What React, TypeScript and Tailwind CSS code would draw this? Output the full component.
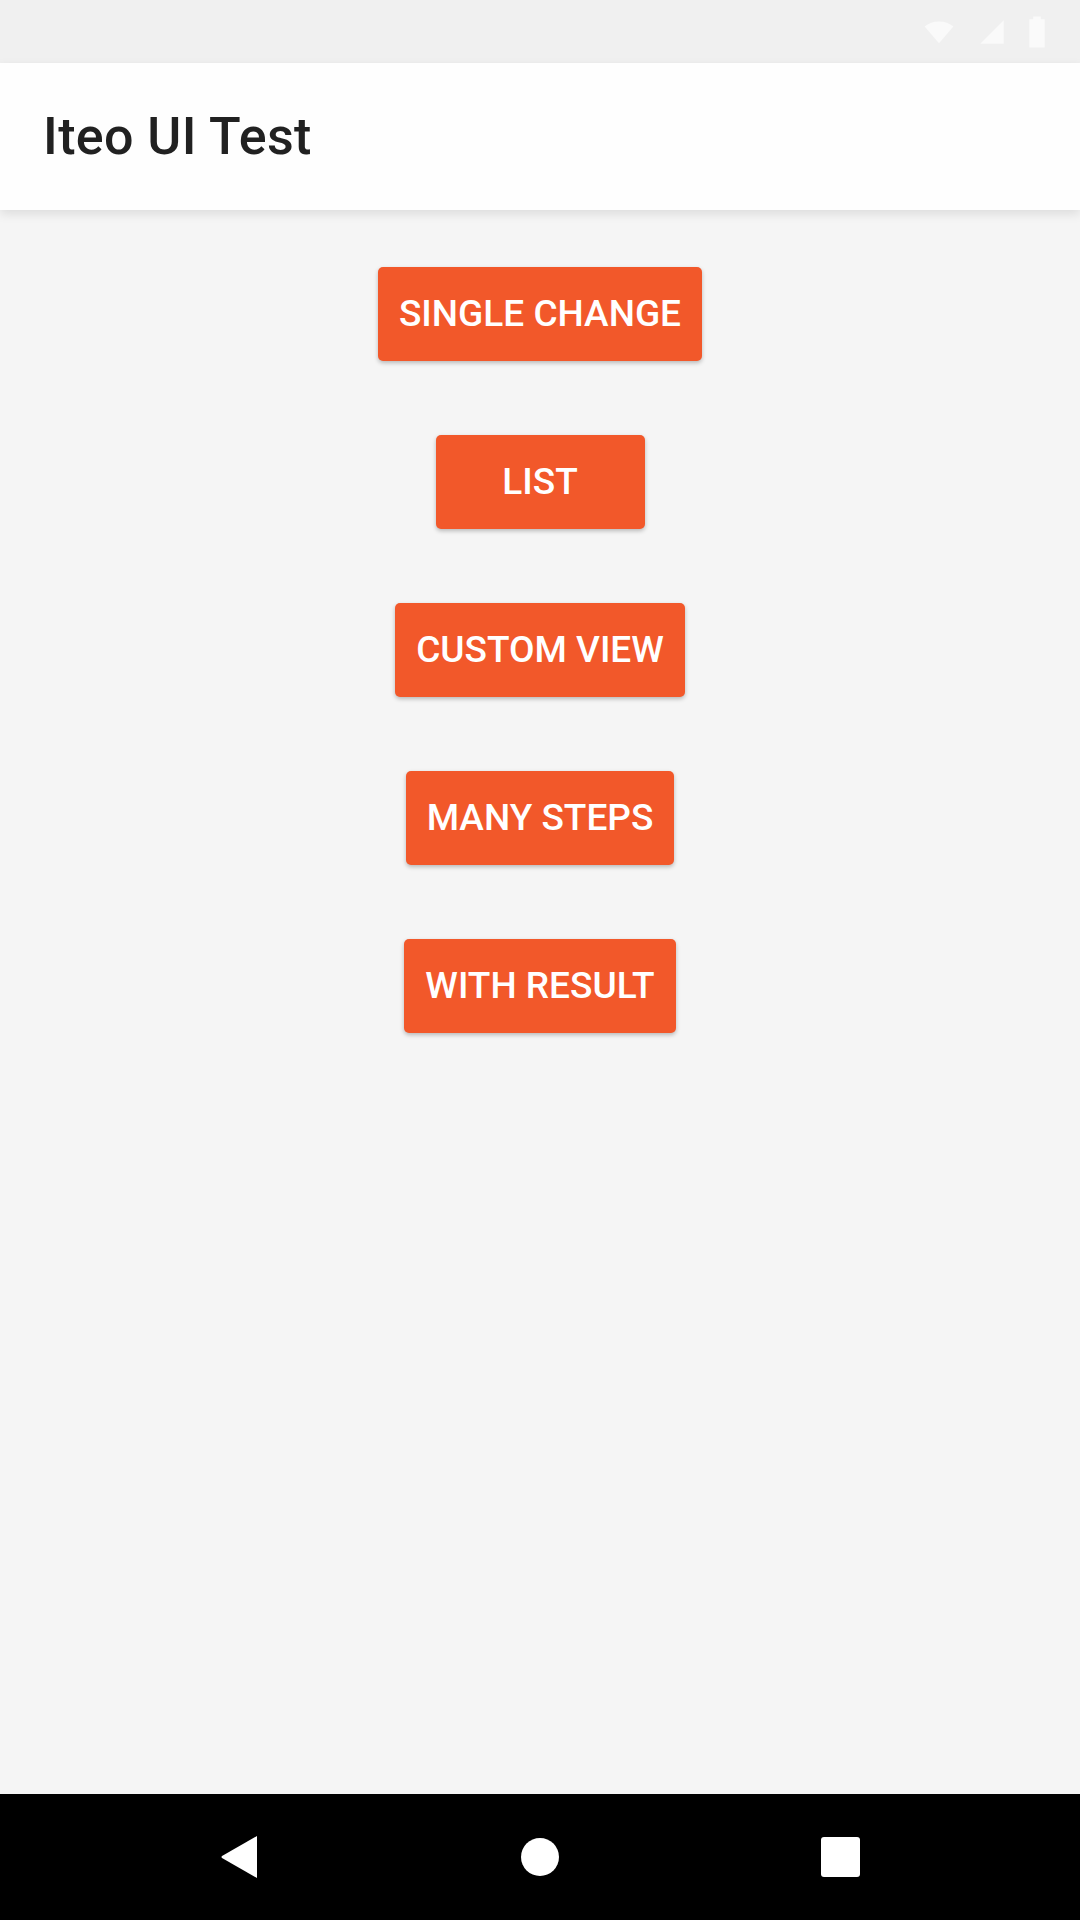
import React from 'react';

const buttons = ['Single change', 'List', 'Custom view', 'Many steps', 'With result'];

export default function App() {
  return (
    <div className="w-[1080px] h-[1920px] flex flex-col bg-[#f5f5f5] overflow-hidden" style={{ fontFamily: 'Roboto, "Noto Sans", sans-serif' }}>
      {/* Status bar */}
      <div className="h-[63px] bg-[#f0f0f0] flex items-center justify-end gap-[22px] pr-[34px]">
        <svg width="34" height="30" viewBox="0 0 24 24" fill="#fafafa">
          <path d="M12 21 L23.5 7.5 C20.5 5 16.5 3.5 12 3.5 C7.5 3.5 3.5 5 0.5 7.5 Z" />
        </svg>
        <svg width="28" height="28" viewBox="0 0 24 24" fill="#fafafa">
          <path d="M2 22 L22 22 L22 2 Z" />
        </svg>
        <svg width="18" height="32" viewBox="0 0 14 24" fill="#fafafa">
          <path d="M4 0 H10 V2 H13 V24 H1 V2 H4 Z" />
        </svg>
      </div>

      {/* Toolbar */}
      <div className="relative z-10 h-[147px] bg-[#fefefe] flex items-center pl-[43px] shadow-[0_4px_10px_rgba(0,0,0,0.1)]">
        <h1 className="text-[52px] font-medium text-[#212121] tracking-[0.4px]">Iteo UI Test</h1>
      </div>

      {/* Content */}
      <main className="flex-1 flex flex-col items-center pt-[57px] gap-[74px]">
        {buttons.map((label) => (
          <button
            key={label}
            className="h-[94px] min-w-[209px] px-[21px] rounded-[5px] bg-[#f2582a] text-white text-[37px] font-medium uppercase shadow-[0_2px_4px_rgba(0,0,0,0.25)]"
          >
            {label}
          </button>
        ))}
      </main>

      {/* Navigation bar */}
      <div className="h-[126px] bg-black flex items-center justify-center gap-[262px]">
        <svg width="38" height="44" viewBox="0 0 38 44" fill="#ffffff">
          <path d="M36 1 L36 43 L1 23 Q0 22 1 21 Z" />
        </svg>
        <div className="w-[38px] h-[38px] rounded-full bg-white" />
        <div className="w-[39px] h-[40px] rounded-[3px] bg-white" />
      </div>
    </div>
  );
}
